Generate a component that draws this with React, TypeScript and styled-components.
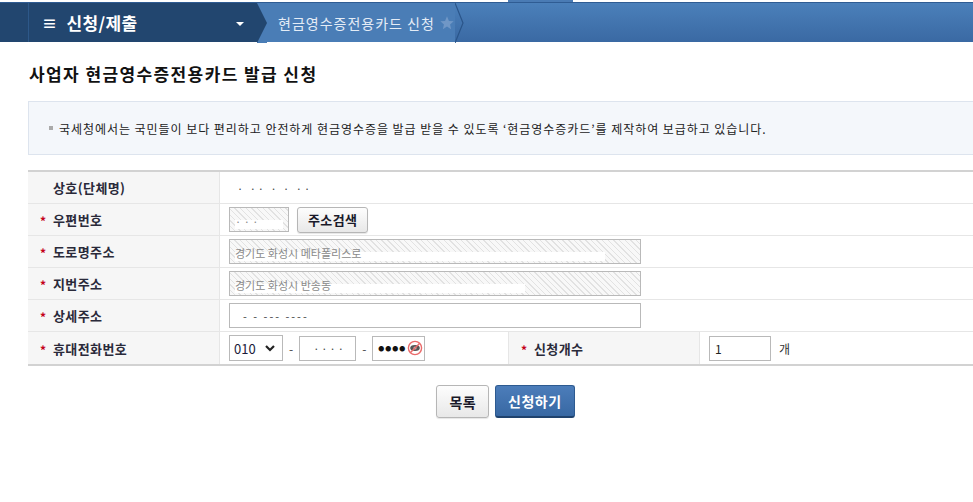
import React from 'react';
import styled, { createGlobalStyle } from 'styled-components';

const GlobalStyle = createGlobalStyle`
    html, body {
        margin: 0;
        padding: 0;
        background: #fff;
        font-family: 'Noto Sans CJK KR', 'Noto Sans', 'Liberation Sans', sans-serif;
        overflow: hidden;
    }
`;

const hatch = `repeating-linear-gradient(45deg, #f8f8f8 0px, #f8f8f8 3px, #e2e2e2 3px, #e2e2e2 4px)`;

const App = () => {
    return (
        <Page>
            <GlobalStyle />
            <TopStrip>
                <TopTab />
            </TopStrip>
            <NavBar>
                <NavEdge />
                <NavMenu>
                    <MenuTitle>
                        <span>≡</span>
                        신청/제출
                    </MenuTitle>
                    <Caret />
                </NavMenu>
                <svg width="10" height="40" viewBox="0 0 10 40" style={{ display: 'block', background: '#4a7db6' }}>
                    <polygon points="0,0 10,20 0,40" fill="#22466f" />
                </svg>
                <Crumb>
                    현금영수증전용카드 신청
                    <svg width="16" height="16" viewBox="0 0 24 24">
                        <path
                            d="M12 2l2.9 6.9 7.1.6-5.4 4.7 1.6 7-6.2-3.8-6.2 3.8 1.6-7L2 9.5l7.1-.6z"
                            fill="#7097c6"
                        />
                    </svg>
                </Crumb>
                <svg width="10" height="40" viewBox="0 0 10 40" style={{ display: 'block' }}>
                    <polyline points="0,0 8,20 0,40" fill="none" stroke="#2a5589" strokeWidth="1.2" />
                </svg>
            </NavBar>

            <Content>
                <PageTitle>사업자 현금영수증전용카드 발급 신청</PageTitle>

                <InfoBox>
                    <Bullet />
                    국세청에서는 국민들이 보다 편리하고 안전하게 현금영수증을 발급 받을 수 있도록 ‘현금영수증카드’를 제작하여
                    보급하고 있습니다.
                </InfoBox>

                <Form>
                    <Label>상호(단체명)</Label>
                    <Value $span>
                        <Masked>· ·· ·   · ··</Masked>
                    </Value>

                    <Label $required>우편번호</Label>
                    <Value $span>
                        <Field $w={60} $readonly>
                            <Blank $w={48}>· · ·</Blank>
                        </Field>
                        <GrayButton>주소검색</GrayButton>
                    </Value>

                    <Label $required>도로명주소</Label>
                    <Value $span>
                        <Field $w={412} $readonly>
                            <Blank $w={370}>경기도 화성시 메타폴리스로</Blank>
                        </Field>
                    </Value>

                    <Label $required>지번주소</Label>
                    <Value $span>
                        <Field $w={412} $readonly>
                            <Blank $w={290}>경기도 화성시 반송동</Blank>
                        </Field>
                    </Value>

                    <Label $required>상세주소</Label>
                    <Value $span>
                        <Field $w={412}>
                            <Masked>- -  --- ----</Masked>
                        </Field>
                    </Value>

                    <Label $required $last>휴대전화번호</Label>
                    <Value $last>
                        <Select>
                            010
                            <svg width="12" height="12" viewBox="0 0 12 12">
                                <path d="M2 4l4 4 4-4" fill="none" stroke="#222" strokeWidth="2.2" />
                            </svg>
                        </Select>
                        <Dash>-</Dash>
                        <Field $w={57}>
                            <Masked>····</Masked>
                        </Field>
                        <Dash>-</Dash>
                        <Field $w={53}>
                            <Dots>●●●●</Dots>
                            <svg width="16" height="16" viewBox="0 0 16 16">
                                <circle cx="8" cy="8" r="6.6" fill="none" stroke="#ea6a6a" strokeWidth="1.4" />
                                <ellipse cx="8" cy="8" rx="4.8" ry="3" fill="#555" />
                                <circle cx="8" cy="8" r="1.6" fill="#bbb" />
                                <line x1="3.5" y1="12.5" x2="12.5" y2="3.5" stroke="#ea6a6a" strokeWidth="1.4" />
                            </svg>
                        </Field>
                    </Value>
                    <Label $required $last $bordered>신청개수</Label>
                    <Value $last>
                        <Field $w={62}>1</Field>
                        <Unit>개</Unit>
                    </Value>
                </Form>

                <Actions>
                    <GrayButton $large>목록</GrayButton>
                    <BlueButton>신청하기</BlueButton>
                </Actions>
            </Content>
        </Page>
    );
};

export default App;

const Page = styled.div`
    width: 973px;
    height: 502px;
    overflow: hidden;
`;

const TopStrip = styled.div`
    height: 2px;
`;

const TopTab = styled.div`
    margin-left: 508px;
    width: 65px;
    height: 2px;
    background: #4a7bb4;
`;

const NavBar = styled.div`
    display: flex;
    height: 40px;
    background: linear-gradient(#4b80ba, #3a69a3);
    border-top: 1px solid #2f5c93;
    box-sizing: border-box;
`;

const NavEdge = styled.div`
    width: 28px;
    background: #22466f;
    border-right: 1px solid #2d5889;
`;

const NavMenu = styled.div`
    width: 228px;
    background: #22466f;
    display: flex;
    align-items: center;
    justify-content: space-between;
    padding: 0 13px 0 13px;
    box-sizing: border-box;
`;

const MenuTitle = styled.div`
    color: #fff;
    font-size: 17px;
    font-weight: bold;
    letter-spacing: 0.4px;
    display: flex;
    align-items: center;
    gap: 9px;

    span {
        font-size: 15px;
    }
`;

const Caret = styled.div`
    width: 0;
    height: 0;
    border-left: 4px solid transparent;
    border-right: 4px solid transparent;
    border-top: 4px solid #fff;
    margin-top: 2px;
`;

const Crumb = styled.div`
    width: 188px;
    background: #4a7db6;
    color: #e4ecf6;
    font-size: 14px;
    letter-spacing: 1px;
    display: flex;
    align-items: center;
    gap: 4px;
    padding-left: 11px;
    box-sizing: border-box;
    white-space: nowrap;
`;

const Content = styled.div`
    padding: 21px 0 0 28px;
`;

const PageTitle = styled.h1`
    margin: 0 0 0 1px;
    font-size: 17px;
    letter-spacing: 1.4px;
    line-height: 22px;
    font-weight: bold;
    color: #111;
`;

const InfoBox = styled.div`
    margin-top: 16px;
    height: 54px;
    box-sizing: border-box;
    background: #f4f7fb;
    border: 1px solid #dde4ee;
    border-right: none;
    display: flex;
    align-items: center;
    padding-left: 20px;
    font-size: 12px;
    letter-spacing: 0.95px;
    color: #222;
    white-space: nowrap;
`;

const Bullet = styled.span`
    width: 4px;
    height: 4px;
    background: #aaa;
    margin-right: 6px;
`;

const Form = styled.div`
    margin-top: 15px;
    display: grid;
    grid-template-columns: 192px 288px 192px 1fr;
    border-top: 2px solid #d2d2d2;
    border-bottom: 2px solid #d2d2d2;
`;

const Label = styled.div<{ $required?: boolean; $last?: boolean; $bordered?: boolean }>`
    background: #f6f6f6;
    height: ${p => (p.$last ? '32px' : '31px')};
    display: flex;
    align-items: center;
    padding-left: ${p => (p.$required ? '12px' : '25px')};
    font-size: 13px;
    font-weight: bold;
    letter-spacing: 0.4px;
    color: #2a2a3a;
    border-bottom: ${p => (p.$last ? 'none' : '1px solid #e6e6e6')};
    border-right: 1px solid #e6e6e6;
    border-left: ${p => (p.$bordered ? '1px solid #e6e6e6' : 'none')};

    &::before {
        content: ${p => (p.$required ? "'*'" : 'none')};
        color: #c4001a;
        font-size: 12px;
        width: 13px;
        margin-top: 2px;
    }
`;

const Value = styled.div<{ $span?: boolean; $last?: boolean }>`
    grid-column: ${p => (p.$span ? 'span 3' : 'auto')};
    height: ${p => (p.$last ? '32px' : '31px')};
    display: flex;
    align-items: center;
    gap: 8px;
    padding-left: 9px;
    border-bottom: ${p => (p.$last ? 'none' : '1px solid #e6e6e6')};
    font-size: 12px;
    color: #222;
`;

const Field = styled.div<{ $w: number; $readonly?: boolean }>`
    width: ${p => p.$w}px;
    height: 25px;
    box-sizing: border-box;
    border: 1px solid #b9b9b9;
    background: ${p => (p.$readonly ? hatch : '#fff')};
    display: flex;
    align-items: center;
    padding-left: 5px;
    font-size: 12px;
    color: #222;
    gap: 1px;
    overflow: hidden;
    white-space: nowrap;
`;

const Blank = styled.span<{ $w: number }>`
    width: ${p => p.$w}px;
    background: linear-gradient(transparent 45%, #fff 45%);
    color: #8a8a8a;
    font-size: 11px;
    line-height: 16px;
    margin-top: 3px;
`;

const Masked = styled.span`
    color: #444;
    font-size: 11px;
    letter-spacing: 2px;
    padding-left: 8px;
`;

const Dots = styled.span`
    font-size: 6px;
    letter-spacing: 1px;
    color: #111;
`;

const Select = styled.div`
    width: 54px;
    height: 26px;
    box-sizing: border-box;
    border: 1px solid #b9b9b9;
    background: #fff;
    display: flex;
    align-items: center;
    justify-content: space-between;
    padding: 0 6px 0 4px;
    font-size: 13px;
    color: #1b1b3a;
`;

const Dash = styled.span`
    color: #444;
    font-size: 12px;
    margin: 0 -2px;
`;

const Unit = styled.span`
    font-size: 12px;
    color: #333;
`;

const GrayButton = styled.button<{ $large?: boolean }>`
    height: ${p => (p.$large ? '33px' : '26px')};
    padding: 0 ${p => (p.$large ? '12px' : '10px')};
    border: 1px solid #b6b6b6;
    border-radius: 3px;
    background: linear-gradient(#fdfdfd, #e8e8e8);
    font-family: inherit;
    font-size: ${p => (p.$large ? '14px' : '13px')};
    font-weight: bold;
    letter-spacing: 0.4px;
    color: #1a1a2a;
    box-shadow: 0 1px 1px rgba(0, 0, 0, 0.1);
`;

const BlueButton = styled.button`
    height: 33px;
    padding: 0 12px;
    border: 1px solid #2d5a90;
    border-bottom: 2px solid #1f426d;
    border-radius: 3px;
    background: linear-gradient(#4c7dba, #3868a3);
    font-family: inherit;
    font-size: 14px;
    font-weight: bold;
    letter-spacing: 0.5px;
    color: #fff;
`;

const Actions = styled.div`
    display: flex;
    justify-content: center;
    gap: 6px;
    margin-top: 19px;
    width: 945px;
    padding-left: 10px;
    box-sizing: border-box;
`;
